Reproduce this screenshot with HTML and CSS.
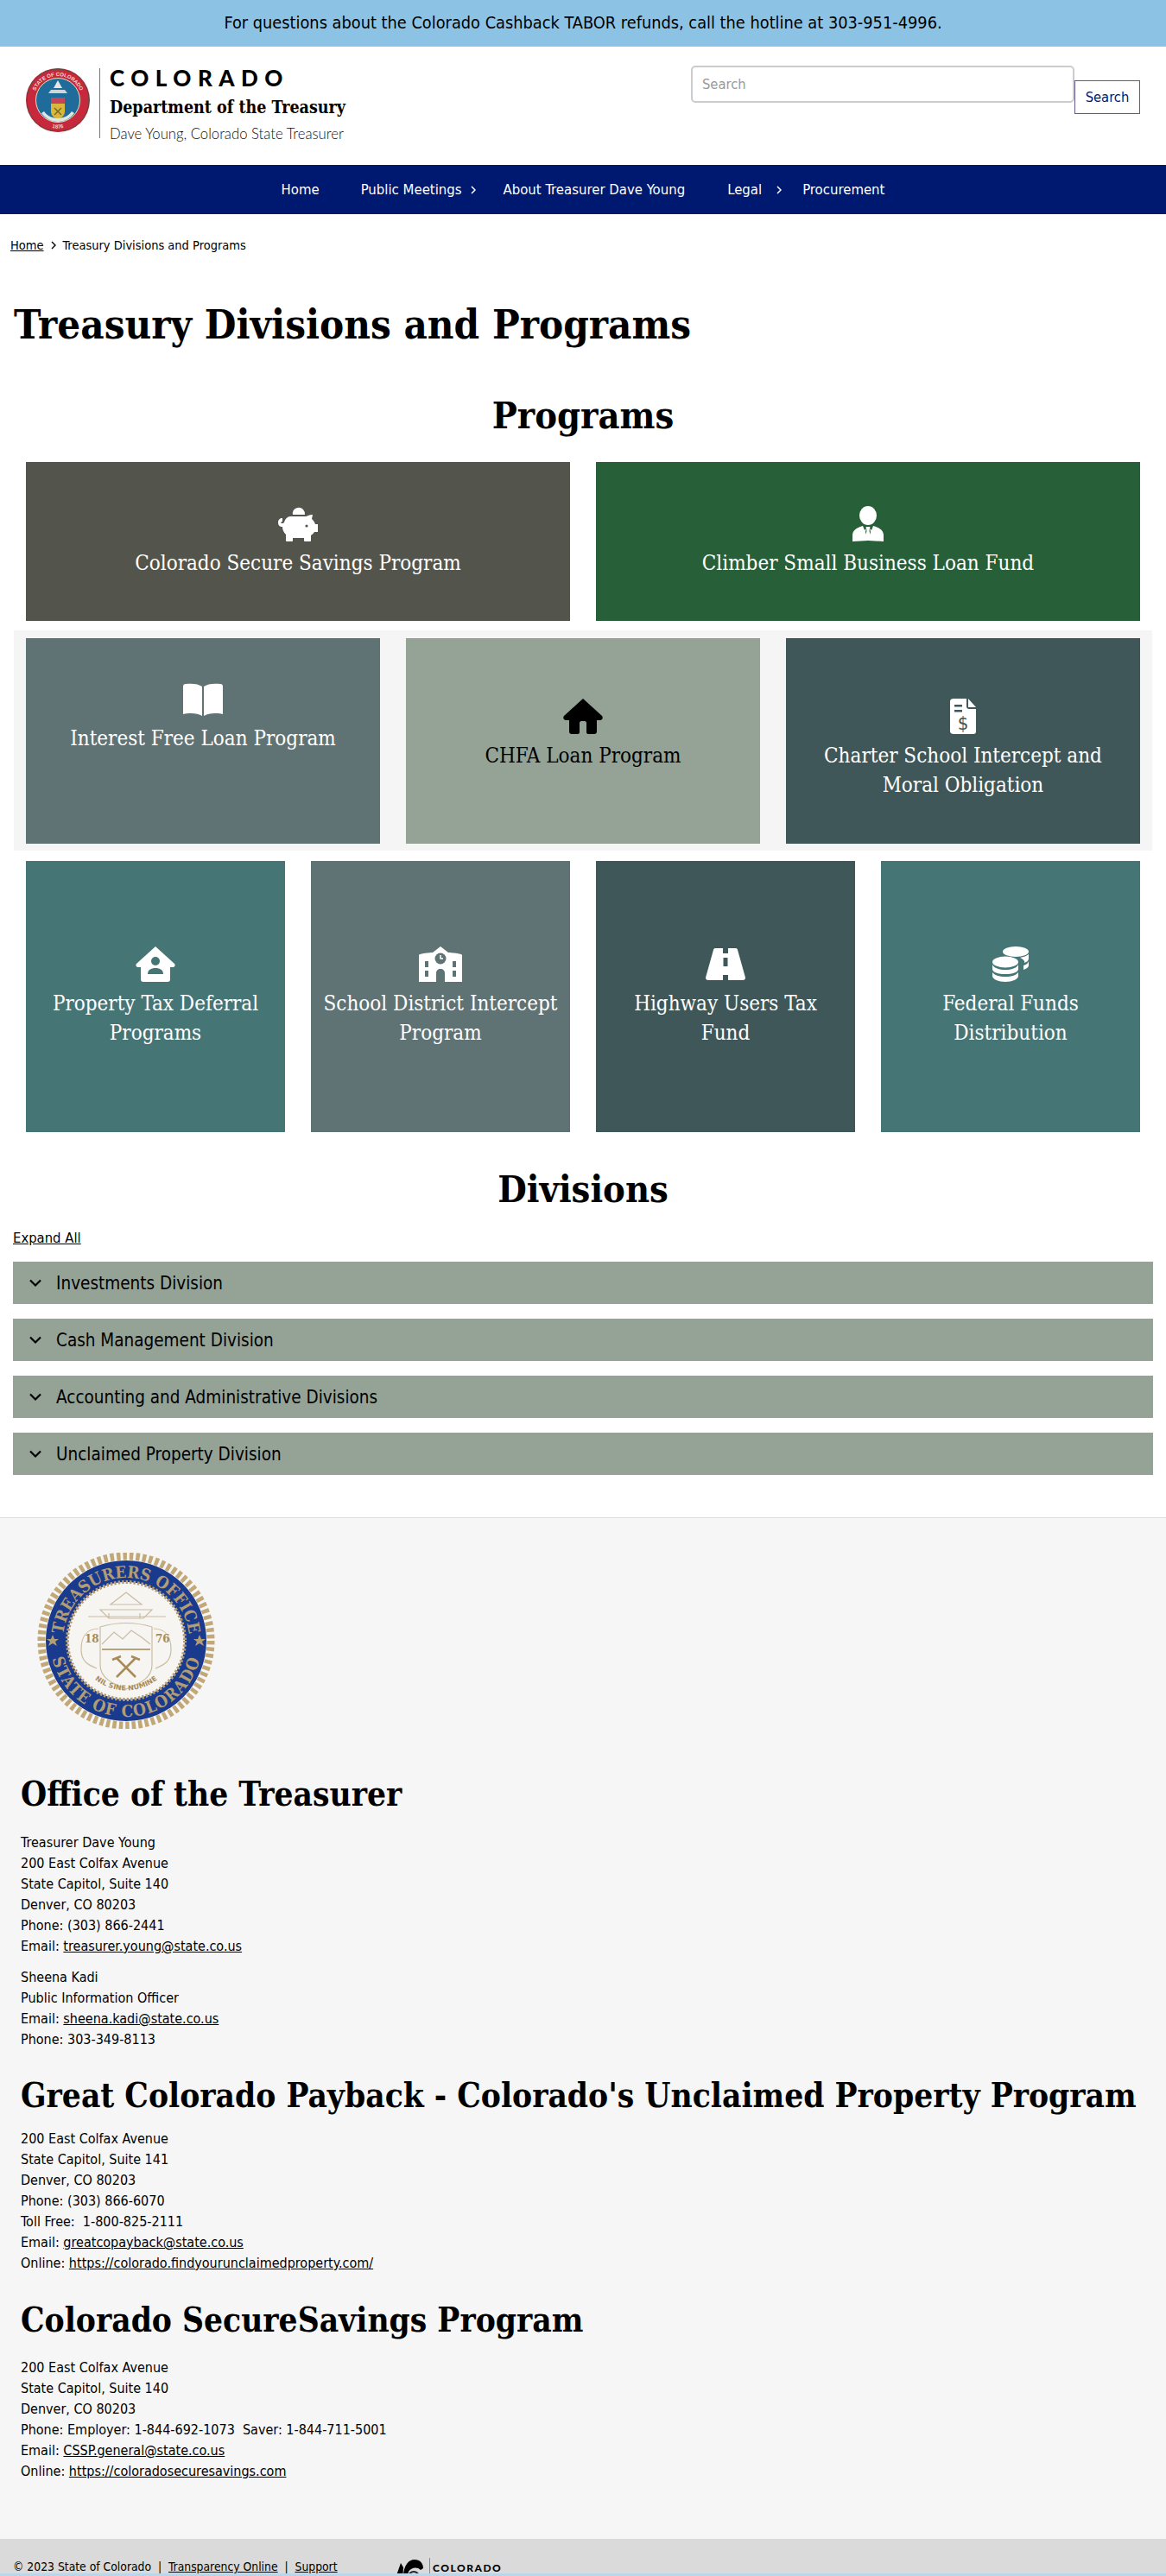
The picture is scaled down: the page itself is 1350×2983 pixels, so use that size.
FILE: index.html
```html
<!DOCTYPE html>
<html lang="en">
<head>
<meta charset="utf-8">
<title>Treasury Divisions and Programs</title>
<link rel="stylesheet" href="styles.css">
</head>
<body>
<div class="banner">For questions about the Colorado Cashback TABOR refunds, call the hotline at 303-951-4996.</div>
<header class="site-header">
  <a class="logo">
    <svg class="logo-seal" viewBox="0 0 74 74">
      <circle cx="37" cy="37" r="37" fill="#c8283c"/>
      <circle cx="37" cy="37" r="36" fill="none" stroke="#5d4a3c" stroke-width="1"/>
      <circle cx="37" cy="37" r="25.5" fill="#1f6c9a" stroke="#e8e0c0" stroke-width="1"/>
      <path d="M29 41h16v9c0 5-4 8-8 9-4-1-8-4-8-9z" fill="#d9b73c"/>
      <path d="M29 34h16v7H29z" fill="#c4455a"/>
      <path d="M33 46l8 8M41 46l-8 8" stroke="#7a6a20" stroke-width="1.5"/>
      <path d="M37 14l5 9h-10z" fill="#e6e6e6"/>
      <path d="M26 29h22l-3-4H29z" fill="#cfd6d8"/>
      <path d="M18 52c5 7 13 10 19 10s14-3 19-10l-3-2c-4 6-11 8-16 8s-12-2-16-8z" fill="#dfe8e0"/>
      <defs><path id="sealtop" d="M9 37a28 28 0 0 1 56 0"/><path id="sealbot" d="M14 60a32 32 0 0 0 46 0"/></defs>
      <text class="logo-seal-text"><textPath href="#sealtop" startOffset="50%" text-anchor="middle">STATE OF COLORADO</textPath></text>
      <text class="logo-seal-text"><textPath href="#sealbot" startOffset="50%" text-anchor="middle">1876</textPath></text>
    </svg>
    <span class="logo-rule"></span>
    <span class="logo-text">
      <span class="logo-co">COLORADO</span>
      <span class="logo-dept">Department of the Treasury</span>
      <span class="logo-name">Dave Young, Colorado State Treasurer</span>
    </span>
  </a>
  <form class="search">
    <input class="search-input" type="text" placeholder="Search">
    <button class="search-btn" type="button">Search</button>
  </form>
</header>
<nav class="main-nav">
  <a class="nav-item">Home</a>
  <a class="nav-item nav-sub">Public Meetings<svg class="nav-chev" viewBox="0 0 6 10"><path d="M1 1l4 4-4 4" fill="none" stroke="#fff" stroke-width="1.5"/></svg></a>
  <a class="nav-item nav-after">About Treasurer Dave Young</a>
  <a class="nav-item nav-sub">Legal<svg class="nav-chev nav-chev-wide" viewBox="0 0 6 10"><path d="M1 1l4 4-4 4" fill="none" stroke="#fff" stroke-width="1.5"/></svg></a>
  <a class="nav-item nav-last">Procurement</a>
</nav>
<main class="content">
  <div class="crumbs"><a class="link">Home</a><svg class="crumb-chev" viewBox="0 0 6 10"><path d="M1 1l4 4-4 4" fill="none" stroke="#000" stroke-width="1.4"/></svg><span>Treasury Divisions and Programs</span></div>
  <h1 class="page-title">Treasury Divisions and Programs</h1>
  <h2 class="section-title">Programs</h2>

  <div class="row row-2">
    <a class="card c-olive pad-a">
      <svg class="ico" viewBox="0 0 46 41" fill="#fff"><path d="M17 10a7 7 0 0 1 12-6 8 8 0 0 1 2 6z"/><path d="M14 12h18c1 0 4-2 8-2l-1 5c2 2 3 3 4 6h3v9h-4c-1 2-3 3-4 4v6c0 1-1 1-1 1h-6c-1 0-1-1-1-1v-3H17v3c0 1-1 1-1 1h-6c-1 0-1-1-1-1v-7c-3-3-4-6-4-9-1 0-5 0-5-5 0-3 2-5 5-5v4c-2 0-2 2-1 2 1 0 2 0 3-1 1-4 4-7 7-7z"/><circle cx="33" cy="23" r="1.6" fill="#53544b"/></svg>
      <span class="card-label">Colorado Secure Savings Program</span>
    </a>
    <a class="card c-green pad-a">
      <svg class="ico" viewBox="0 0 36 41" fill="#fff"><ellipse cx="18" cy="11" rx="10" ry="11"/><path d="M0 41v-7c0-6 5-9 12-11l2 5 2-2-1 4 3 10zM36 41v-7c0-6-5-9-12-11l-2 5-2-2 1 4-3 10z"/><path d="M15.500 24h5l-1 4 1.500 9-3 3-3-3 1.500-9z"/></svg>
      <span class="card-label">Climber Small Business Loan Fund</span>
    </a>
  </div>

  <div class="band">
    <div class="row row-3">
      <a class="card c-slate pad-b">
        <svg class="ico" viewBox="0 0 46 41" fill="#fff"><path d="M22 6v34c-3-2-8-3-13-3-3 0-6 0-9 1V6c0-2 1-3 3-3 8-1 15 0 19 3zM24 6v34c3-2 8-3 13-3 3 0 6 0 9 1V6c0-2-1-3-3-3-8-1-15 0-19 3z"/></svg>
        <span class="card-label">Interest Free Loan Program</span>
      </a>
      <a class="card c-sage card-dark pad-c">
        <svg class="ico" viewBox="0 0 46 41" fill="#000"><path d="M23 0L1 20c-1 1-1 3 0 4 1 1 2 1 3 1h3v13c0 2 1 3 3 3h7c1 0 2-1 2-2V28c0-1 1-2 2-2h4c1 0 2 1 2 2v11c0 1 1 2 2 2h7c2 0 3-1 3-3V25h3c1 0 2 0 3-1 1-1 1-3 0-4z"/></svg>
        <span class="card-label">CHFA Loan Program</span>
      </a>
      <a class="card c-teal-dark pad-c">
        <svg class="ico" viewBox="0 0 30 41"><path fill="#fff" d="M4 0h15v9c0 2 1 3 3 3h8v26c0 2-1 3-3 3H4c-2 0-4-1-4-3V3c0-2 2-3 4-3zM21 0l9 10h-9z"/><path fill="#3f5758" d="M5 7h9v2.500H5zM5 13h9v2.500H5z"/><text class="ico-dollar" x="15" y="36" text-anchor="middle">$</text></svg>
        <span class="card-label">Charter School Intercept and<br>Moral Obligation</span>
      </a>
    </div>
  </div>

  <div class="row row-4">
    <a class="card c-teal pad-d">
      <svg class="ico" viewBox="0 0 46 41" fill="#fff"><path d="M23 0L1 20c-1 1-1 3 1 4h4v14c0 2 1 3 3 3h28c2 0 3-1 3-3V24h4c2-1 2-3 1-4z"/><circle cx="23" cy="17" r="5" fill="#467576"/><path d="M14 32c0-5 4-7 9-7s9 2 9 7z" fill="#467576"/></svg>
      <span class="card-label">Property Tax Deferral<br>Programs</span>
    </a>
    <a class="card c-slate pad-d">
      <svg class="ico" viewBox="0 0 50 41" fill="#fff"><path d="M25 0l9 7c2 0 16 1 16 3v31H0V10c0-2 14-3 16-3z"/><circle cx="25" cy="14" r="6.500" fill="#5f7274"/><path d="M25 10v4h3" stroke="#fff" stroke-width="1.500" fill="none"/><path d="M20 41V31c0-3 2-5 5-5s5 2 5 5v10zM7 17h4v7H7zM7 28h4v7H7zM39 17h4v7h-4zM39 28h4v7h-4z" fill="#5f7274"/></svg>
      <span class="card-label">School District Intercept<br>Program</span>
    </a>
    <a class="card c-teal-dark pad-d">
      <svg class="ico" viewBox="0 0 46 41" fill="#fff"><path d="M11 2h9v6h6V2h9c1 0 2 1 2 2l9 32c0 2-1 3-3 3H26v-6h-6v6H3c-2 0-3-1-3-3L9 4c0-1 1-2 2-2z"/><path d="M20.500 13h5v10h-5z" fill="#3f5758"/></svg>
      <span class="card-label">Highway Users Tax<br>Fund</span>
    </a>
    <a class="card c-teal pad-d">
      <svg class="ico" viewBox="0 0 42 41" fill="#fff"><ellipse cx="27" cy="6" rx="15" ry="6"/><path d="M42 9v5c0 2-2 4-5 5v-2c-1-2-3-3-5-4 4-1 8-2 10-4zM42 17v5c0 2-3 4-6 5v-5c3-1 5-2 6-5z"/><ellipse cx="15" cy="18" rx="15" ry="6.500"/><path d="M0 21c2 4 8 6 15 6s13-2 15-6v5c0 4-7 6-15 6S0 30 0 26zM0 30c2 3 8 5 15 5s13-2 15-5v4c0 4-7 7-15 7S0 38 0 34z"/></svg>
      <span class="card-label">Federal Funds<br>Distribution</span>
    </a>
  </div>

  <h2 class="section-title divisions-title">Divisions</h2>
  <a class="link expand">Expand All</a>
  <div class="accordion">
    <div class="acc-item"><svg class="acc-chev" viewBox="0 0 16 12"><path d="M2 2.500l6 6 6-6" fill="none" stroke="#000" stroke-width="2.200"/></svg>Investments Division</div>
    <div class="acc-item"><svg class="acc-chev" viewBox="0 0 16 12"><path d="M2 2.500l6 6 6-6" fill="none" stroke="#000" stroke-width="2.200"/></svg>Cash Management Division</div>
    <div class="acc-item"><svg class="acc-chev" viewBox="0 0 16 12"><path d="M2 2.500l6 6 6-6" fill="none" stroke="#000" stroke-width="2.200"/></svg>Accounting and Administrative Divisions</div>
    <div class="acc-item"><svg class="acc-chev" viewBox="0 0 16 12"><path d="M2 2.500l6 6 6-6" fill="none" stroke="#000" stroke-width="2.200"/></svg>Unclaimed Property Division</div>
  </div>
</main>
<footer class="site-footer">
  <svg class="footer-seal" viewBox="0 0 208 204">
    <circle cx="104" cy="102" r="98" fill="none" stroke="#c2a877" stroke-width="9" stroke-dasharray="4.500 3"/>
    <circle cx="104" cy="102" r="93" fill="#1a3a8e"/>
    <circle cx="104" cy="102" r="68" fill="#f7f5f2" stroke="#b39d74" stroke-width="4" stroke-dasharray="2.500 2"/>
    <defs>
      <path id="ringtop" d="M31 102a73 73 0 0 1 146 0"/>
      <path id="ringbot" d="M16 102a88 88 0 0 0 176 0"/>
      <path id="motto" d="M56 134a58 58 0 0 0 96 0"/>
    </defs>
    <text class="seal-ring"><textPath href="#ringtop" startOffset="50%" text-anchor="middle">TREASURERS OFFICE</textPath></text>
    <text class="seal-ring seal-ring-b"><textPath href="#ringbot" startOffset="50%" text-anchor="middle">STATE OF COLORADO</textPath></text>
    <path d="M19 95l2 5h5l-4 3 2 5-5-3-5 3 2-5-4-3h5zM189 95l2 5h5l-4 3 2 5-5-3-5 3 2-5-4-3h5z" fill="#b39d74"/>
    <g fill="none" stroke="#c9bca3" stroke-width="1.200">
      <path d="M74 66h60l-10 10H84zM60 74h90M84 76v-6M120 76v-6M104 46l18 14H86z"/>
      <path d="M74 86c20-6 40-6 60 0v44c0 16-16 22-30 28-14-6-30-12-30-28z"/>
      <path d="M76 106l14-14 10 8 10-10 12 8 10 8"/>
      <path d="M72 88c-14 0-20 10-20 24s8 18 18 22M136 88c14 0 20 10 20 24s-8 18-18 22"/>
    </g>
    <path d="M76 112h56" stroke="#b8a37c" stroke-width="2"/>
    <path d="M93 122l22 22M115 122l-22 22M88 124l10-4M120 124l-10-4" stroke="#a98b5a" stroke-width="2.500" fill="none"/>
    <text class="seal-year" x="56" y="104">18</text>
    <text class="seal-year" x="138" y="104">76</text>
    <text class="seal-motto"><textPath href="#motto" startOffset="50%" text-anchor="middle">NIL SINE NUMINE</textPath></text>
  </svg>
  <h2 class="foot-title t-office">Office of the Treasurer</h2>
  <p class="foot-p p-office">Treasurer Dave Young<br>200 East Colfax Avenue<br>State Capitol, Suite 140<br>Denver, CO 80203<br>Phone: (303) 866-2441<br>Email: <a class="link">treasurer.young@state.co.us</a></p>
  <p class="foot-p p-next">Sheena Kadi<br>Public Information Officer<br>Email: <a class="link">sheena.kadi@state.co.us</a><br>Phone: 303-349-8113</p>
  <h2 class="foot-title t-payback">Great Colorado Payback - Colorado's Unclaimed Property Program</h2>
  <p class="foot-p p-payback">200 East Colfax Avenue<br>State Capitol, Suite 141<br>Denver, CO 80203<br>Phone: (303) 866-6070<br>Toll Free:&nbsp; 1-800-825-2111<br>Email: <a class="link">greatcopayback@state.co.us</a><br>Online: <a class="link">https://colorado.findyourunclaimedproperty.com/</a></p>
  <h2 class="foot-title t-secure">Colorado SecureSavings Program</h2>
  <p class="foot-p p-secure">200 East Colfax Avenue<br>State Capitol, Suite 140<br>Denver, CO 80203<br>Phone: Employer: 1-844-692-1073&nbsp; Saver: 1-844-711-5001<br>Email: <a class="link">CSSP.general@state.co.us</a><br>Online: <a class="link">https://coloradosecuresavings.com</a></p>
</footer>
<div class="legal">
  <div class="legal-text">© 2023 State of Colorado &nbsp;|&nbsp; <a class="link">Transparency Online</a> &nbsp;|&nbsp; <a class="link">Support</a></div>
  <div class="legal-logo">
    <svg class="legal-mark" viewBox="0 0 33 24"><path d="M0 24L7 4l3 5-1 15z" fill="#000"/><path d="M10 24C9 9 15 0 23 0c6 0 10 4 10 10l-3 2c-4-4-11-3-14 2-1 3-1 6-1 10z" fill="#000"/><circle cx="22" cy="20" r="6" fill="none" stroke="#222" stroke-width="2"/></svg>
    <span class="legal-rule"></span>
    <span class="legal-co">COLORADO</span>
  </div>
</div>
<div class="bottom-strip"></div>
</body>
</html>
```
FILE: styles.css
```css
* { box-sizing: border-box; }
html, body { margin: 0; padding: 0; }
body {
  height: 2983px;
  overflow: hidden;
  position: relative;
  background: #fff;
  color: #000;
  font-family: "DejaVu Sans", sans-serif;
  font-stretch: condensed;
  font-size: 16px;
  line-height: 24px;
}
.link { color: #000; text-decoration: underline; }

.banner {
  height: 54px;
  background: #8cc3e5;
  display: flex;
  align-items: center;
  justify-content: center;
  font-size: 19.800px;
}

.site-header {
  height: 137px;
  display: flex;
  justify-content: space-between;
  padding: 0 30px;
  align-items: flex-start;
}
.logo { display: flex; align-items: flex-start; margin-top: 25px; }
.logo-seal { width: 74px; height: 74px; flex: none; }
.logo-seal-text { font-family: "Liberation Sans", sans-serif; font-stretch: normal; font-size: 6px; font-weight: 700; fill: #f4d9d0; }
.logo-rule { width: 1px; height: 81px; background: #777; margin: 0 11px 0 11px; }
.logo-text { display: flex; flex-direction: column; margin-top: -3px; }
.logo-co { font-family: "Lato", sans-serif; font-stretch: normal; font-weight: 900; font-size: 26px; line-height: 28px; letter-spacing: 7.5px; }
.logo-dept { font-family: "DejaVu Serif", serif; font-weight: 700; font-size: 19.500px; line-height: 24px; margin-top: 9px; }
.logo-name { font-family: "Lato", sans-serif; font-stretch: normal; font-weight: 300; font-size: 16.700px; line-height: 24px; margin-top: 6px; color: #111; }

.search { display: flex; align-items: flex-start; }
.search-input {
  width: 444px;
  height: 43px;
  margin-top: 22px;
  border: 2px solid #ccc;
  border-radius: 5px;
  padding: 0 11px;
  font: inherit;
  font-size: 16.400px;
  background: #fff;
}
.search-input::placeholder { color: #999; opacity: 1; }
.search-btn {
  width: 76px;
  height: 39px;
  margin-top: 39px;
  background: #fff;
  border: 1px solid #5f5a8c;
  color: #001970;
  font: inherit;
  font-size: 16.400px;
  padding: 0;
}

.main-nav {
  height: 57px;
  background: #001970;
  color: #fff;
  display: flex;
  justify-content: center;
  align-items: center;
  font-size: 16.600px;
}
.nav-item { padding: 0 24px; display: flex; align-items: center; white-space: nowrap; }
.nav-sub { padding-right: 0; }
.nav-after { padding-left: 32px; padding-right: 25px; }
.nav-last { padding-left: 24px; padding-right: 24px; }
.nav-chev { width: 6px; height: 10px; margin-left: 10px; }
.nav-chev-wide { margin-left: 17px; }

.content { padding: 24px 16px 0; }
.crumbs { display: flex; align-items: center; font-size: 14.500px; height: 24px; margin-left: -4px; }
.crumb-chev { width: 6px; height: 10px; margin: 0 8px; }

.page-title {
  margin: 52px 0 0;
  font-family: "DejaVu Serif", serif;
  font-weight: 700;
  font-size: 47px;
  line-height: 56px;
}
.section-title {
  margin: 53px 0 0;
  text-align: center;
  font-family: "DejaVu Serif", serif;
  font-weight: 700;
  font-size: 43px;
  line-height: 48px;
}

.row { display: grid; gap: 30px; }
.row-2 { grid-template-columns: repeat(2, 1fr); margin: 30px 14px 0; height: 184px; }
.row-3 { grid-template-columns: repeat(3, 1fr); height: 238px; }
.row-4 { grid-template-columns: repeat(4, 1fr); margin: 12px 14px 0; height: 314px; }
.band { margin-top: 11px; padding: 9px 14px 8px; background: #f5f5f5; }

.card {
  display: flex;
  flex-direction: column;
  align-items: center;
  color: #fff;
  text-align: center;
}
.card-dark { color: #000; }
.card-label {
  margin-top: 8px;
  font-family: "DejaVu Serif", serif;
  font-size: 24px;
  line-height: 34px;
  white-space: nowrap;
}
.ico { height: 41px; width: 50px; flex: none; }
.ico-dollar { font-family: "DejaVu Sans", sans-serif; font-size: 22px; fill: #3f5758; }
.pad-a { padding-top: 51px; }
.pad-b { padding-top: 50px; }
.pad-c { padding-top: 70px; }
.pad-d { padding-top: 99px; }
.c-olive { background: #53544b; }
.c-green { background: #265f38; }
.c-slate { background: #5f7274; }
.c-sage { background: #94a396; }
.c-teal-dark { background: #3f5758; }
.c-teal { background: #467576; }

.divisions-title { margin-top: 42px; }
.expand { display: block; margin-top: 21px; margin-left: -1px; font-size: 16.500px; width: fit-content; }
.accordion { display: flex; flex-direction: column; gap: 17px; margin: 15px -1px 0; }
.acc-item {
  height: 49px;
  background: #94a396;
  display: flex;
  align-items: center;
  padding-left: 18px;
  font-size: 20.500px;
}
.acc-chev { width: 16px; height: 12px; margin-right: 16px; flex: none; }

.site-footer {
  margin-top: 49px;
  height: 1183px;
  background: #f6f6f6;
  border-top: 1px solid #ddd;
  padding: 40px 24px 0;
}
.footer-seal { display: block; width: 208px; height: 204px; margin-left: 18px; }
.seal-ring { font-family: "DejaVu Serif", serif; font-weight: 700; font-size: 19px; letter-spacing: 0; fill: #b39d74; }
.seal-ring-b { letter-spacing: 1.2px; }
.seal-year { font-family: "DejaVu Serif", serif; font-stretch: normal; font-weight: 700; font-size: 12px; fill: #a98b5a; }
.seal-motto { font-family: "DejaVu Sans", sans-serif; font-stretch: normal; font-size: 8px; font-weight: 700; fill: #a98b5a; }
.foot-title {
  margin: 0;
  font-family: "DejaVu Serif", serif;
  font-weight: 700;
  font-size: 38.500px;
  line-height: 48px;
  white-space: nowrap;
}
.t-office { margin-top: 52px; }
.t-payback { margin-top: 29px; }
.t-secure { margin-top: 30px; }
.foot-p { margin: 0; }
.p-office { margin-top: 20px; }
.p-next { margin-top: 12px; }
.p-payback { margin-top: 14px; }
.p-secure { margin-top: 19px; }

.legal {
  height: 43px;
  background: #dadada;
  display: flex;
  padding: 20px 15px 0;
  font-size: 13.800px;
  overflow: hidden;
}
.legal-text { width: 442px; white-space: nowrap; }
.legal-logo { display: flex; align-items: flex-start; margin-top: 4px; }
.legal-mark { width: 33px; height: 24px; flex: none; }
.legal-rule { width: 1px; height: 26px; background: #888; margin: -2px 3px 0 7px; }
.legal-co { font-family: "Lato", sans-serif; font-stretch: normal; font-weight: 900; font-size: 12px; letter-spacing: 1.5px; line-height: 16px; margin-top: 2px; }
.bottom-strip { position: absolute; left: 0; right: 0; top: 2980px; height: 3px; background: #b9d7ea; }
```
